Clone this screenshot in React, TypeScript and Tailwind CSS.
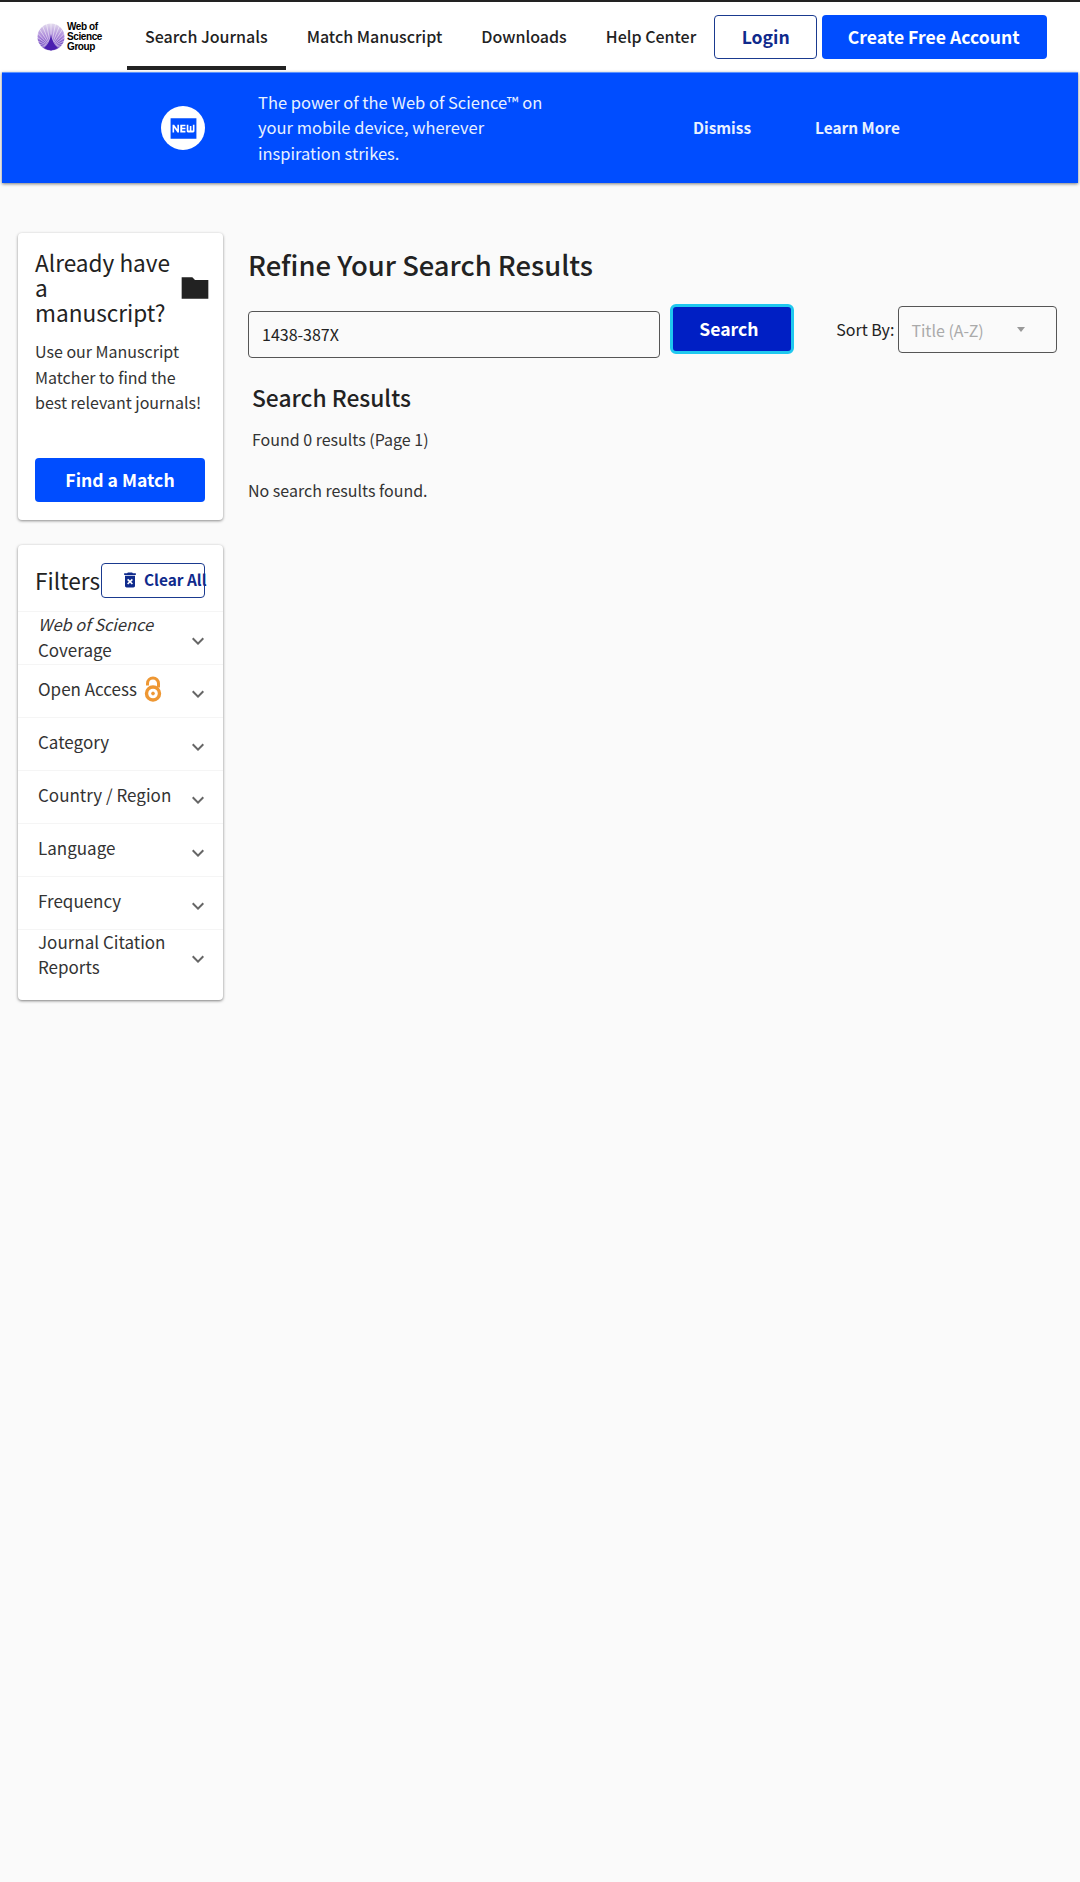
const NAV = ["Search Journals", "Match Manuscript", "Downloads", "Help Center"];
const FILTERS = ["Open Access", "Category", "Country / Region", "Language", "Frequency"];

function Chevron() {
  return (
    <svg viewBox="0 0 24 24" className="w-6 h-6 mt-[6px] shrink-0 fill-[#666666]">
      <path d="M16.59 8.59 12 13.17 7.41 8.59 6 10l6 6 6-6z" />
    </svg>
  );
}

function Logo() {
  const rays = Array.from({ length: 29 }, (_, i) => (i - 14) * 11);
  return (
    <div className="flex items-center gap-[2px] w-[64px] shrink-0">
      <svg viewBox="0 0 28 28" className="w-[28px] h-[28px] shrink-0">
        <defs>
          <linearGradient id="wos" x1="0" y1="0" x2="0" y2="1">
            <stop offset="0" stopColor="#e4dcee" />
            <stop offset="0.5" stopColor="#a884d8" />
            <stop offset="1" stopColor="#4a1fb0" />
          </linearGradient>
        </defs>
        <circle cx="14" cy="14" r="13.5" fill="url(#wos)" />
        {rays.map((a) => (
          <line
            key={a}
            x1="14"
            y1="24"
            x2={14 + 26 * Math.sin((a * Math.PI) / 180)}
            y2={24 - 26 * Math.cos((a * Math.PI) / 180)}
            stroke="#ffffff"
            strokeOpacity="0.75"
            strokeWidth="0.7"
          />
        ))}
        <path d="M7 25 Q13 20 14 11 Q15 20 21 25 Q14 29.5 7 25z" fill="#4a1fb0" />
      </svg>
      <p className="font-['Liberation_Sans',sans-serif] text-[10px] leading-[10px] font-bold tracking-[-0.4px] text-black">
        Web of
        <br />
        Science
        <br />
        Group
      </p>
    </div>
  );
}

function Header() {
  return (
    <header className="bg-white border-t-2 border-[#222222] h-[72px] flex items-center pl-[37px]">
      <Logo />
      <nav className="flex gap-[3px] ml-[26px] self-stretch">
        {NAV.map((item, i) => (
          <a
            key={item}
            className={
              i === 0
                ? "flex items-center px-[18px] text-[16px] font-medium whitespace-nowrap text-[#222222] border-y-4 border-t-transparent border-b-[#222222] mb-[2px]"
                : "flex items-center px-[18px] text-[16px] font-medium whitespace-nowrap text-[#222222] mb-[2px]"
            }
          >
            {item}
          </a>
        ))}
      </nav>
      <button className="w-[103px] h-[44px] rounded border border-[#1a3a8f] text-[17.6px] font-semibold text-[#0f2a8c]">
        Login
      </button>
      <button className="ml-[5px] w-[225px] h-[44px] pr-[2px] rounded bg-[#004dff] text-[17.6px] font-semibold text-white">
        Create Free Account
      </button>
    </header>
  );
}

function Banner() {
  return (
    <div className="mx-[2px] h-[111px] bg-[#004dff] border-t border-[#5b93ff] shadow-[0_1px_3px_rgba(0,0,0,0.5)] flex items-center pl-[159px] text-[#e8f1ff]">
      <div className="w-[44px] h-[44px] rounded-full bg-white flex items-center justify-center shrink-0">
        <svg viewBox="0 0 24 24" className="w-[31px] h-[31px] fill-[#004dff]">
          <path d="M22 4H2v16h20V4zM8.5 15H7.3l-2.55-3.5V15H3.5V9h1.25l2.5 3.5V9H8.5v6zm5-4.74H11v1.12h2.5v1.26H11v1.11h2.5V15h-4V9h4v1.26zm7 3.74c0 .55-.45 1-1 1h-4c-.55 0-1-.45-1-1V9h1.25v4.51h1.13V9.99h1.25v3.51h1.12V9h1.25v5z" />
        </svg>
      </div>
      <p className="ml-[53px] w-[300px] text-[16.5px] leading-[25.6px]">
        The power of the Web of Science™ on your mobile device, wherever inspiration strikes.
      </p>
      <a className="ml-[135px] text-[15.4px] font-semibold">Dismiss</a>
      <a className="ml-[64px] text-[15.4px] font-semibold">Learn More</a>
    </div>
  );
}

function ManuscriptCard() {
  return (
    <section className="bg-white rounded shadow-[0_1px_3px_rgba(0,0,0,0.45)] pl-[17px] pr-[12px] pt-[17px] pb-[18px]">
      <div className="flex items-center justify-between">
        <h2 className="w-[144px] text-[22.6px] leading-[25px] text-[#222222]">Already have a manuscript?</h2>
        <svg viewBox="0 0 24 24" className="w-8 h-8 shrink-0 fill-[#222222]">
          <path d="M10 4H2v16h20V6H12l-2-2z" />
        </svg>
      </div>
      <p className="mt-[14px] text-[16px] leading-[25.5px] text-[#333333]">
        Use our Manuscript Matcher to find the best relevant journals!
      </p>
      <button className="mt-[42px] w-[170px] h-[44px] pt-[1px] rounded bg-[#004dff] text-[17.6px] font-semibold text-white">
        Find a Match
      </button>
    </section>
  );
}

function OpenAccessIcon() {
  return (
    <svg viewBox="0 0 18 27" className="w-[18px] h-[27px] ml-[7px] mt-[2px]" fill="none" stroke="#ee9733">
      <circle cx="9" cy="17.5" r="6.5" strokeWidth="3.4" />
      <circle cx="9" cy="17.5" r="1.4" fill="#ee9733" strokeWidth="1" />
      <path d="M3.5 9.5V7.5a5.5 5.5 0 0 1 11 0v4" strokeWidth="3" />
    </svg>
  );
}

function FilterRow({ children }: { children: React.ReactNode }) {
  return (
    <div className="flex items-center justify-between h-[53px] border-t border-[#f5f5f5] pl-[20px] pr-[13px] text-[17px] leading-[25px] text-[#333333]">
      {children}
      <Chevron />
    </div>
  );
}

function FiltersCard() {
  return (
    <section className="mt-[25px] bg-white rounded shadow-[0_1px_3px_rgba(0,0,0,0.5)] pt-[18px] pb-[18px]">
      <div className="flex items-center pl-[17px] h-[48px] pb-[13px]">
        <h2 className="text-[22.6px] leading-[30px] w-[66px] text-[#222222] mt-[1px]">Filters</h2>
        <button className="w-[104px] h-[35px] rounded border border-[#1a3a8f] flex items-center pl-[18px] text-[15.4px] font-semibold text-[#0f2a8c] whitespace-nowrap">
          <svg viewBox="0 0 24 24" className="w-5 h-5 mr-[4px] shrink-0 fill-[#0f2a8c]">
            <path d="M6 19c0 1.1.9 2 2 2h8c1.1 0 2-.9 2-2V7H6v12zm2.46-7.12 1.41-1.41L12 12.59l2.12-2.12 1.41 1.41L13.41 14l2.12 2.12-1.41 1.41L12 15.41l-2.12 2.12-1.41-1.41L10.59 14l-2.13-2.12zM15.5 4l-1-1h-5l-1 1H5v2h14V4z" />
          </svg>
          Clear All
        </button>
      </div>
      <FilterRow>
        <span className="-mt-[2px]">
          <em className="text-[16.4px]">Web of Science</em>
          <br />
          Coverage
        </span>
      </FilterRow>
      {FILTERS.map((f) => (
        <FilterRow key={f}>
          <span className="flex items-center -mt-[5px]">
            {f}
            {f === "Open Access" && <OpenAccessIcon />}
          </span>
        </FilterRow>
      ))}
      <FilterRow>
        <span className="-mt-[4px]">
          Journal Citation
          <br />
          Reports
        </span>
      </FilterRow>
    </section>
  );
}

function Results() {
  return (
    <main className="flex-1 min-w-0 pt-[13px] text-[#222222]">
      <h1 className="text-[27.4px] leading-[36px] font-medium">Refine Your Search Results</h1>
      <div className="flex items-start mt-[22px]">
        <div className="mt-[7px] w-[413px] h-[47px] pb-[2px] rounded border border-[#555555] flex items-center pl-[13px] text-[16px]">
          1438-387X
        </div>
        <button className="ml-[10px] w-[125px] h-[50px] pr-[6px] rounded-md bg-[#001fc4] border-[3px] border-[#1fc8ef] text-[17.6px] font-semibold text-white">
          Search
        </button>
        <span className="ml-[42px] mt-[13px] text-[16px] leading-[25px] whitespace-nowrap">Sort By:</span>
        <div className="ml-[4px] mt-[2px] w-[159px] h-[47px] rounded border border-[#555555] flex items-center justify-between pl-[12px] pr-[31px] text-[16px] text-[#aaaaaa]">
          Title (A-Z)
          <span className="w-0 h-0 border-x-[4px] border-x-transparent border-t-[5px] border-t-[#999999]" />
        </div>
      </div>
      <h2 className="mt-[25px] ml-[4px] text-[22.8px] leading-[30px] font-medium">Search Results</h2>
      <p className="mt-[13px] ml-[4px] text-[16px] leading-[26px] text-[#333333]">Found 0 results (Page 1)</p>
      <p className="mt-[25px] text-[16px] leading-[26px] text-[#333333]">No search results found.</p>
    </main>
  );
}

export default function App() {
  return (
    <div className="min-h-[1882px] bg-[#fafafa] font-['Noto_Sans_CJK_JP','Noto_Sans',sans-serif]">
      <Header />
      <Banner />
      <div className="flex items-start pl-[18px] pr-[23px] pt-[50px] gap-[25px]">
        <aside className="w-[205px] shrink-0">
          <ManuscriptCard />
          <FiltersCard />
        </aside>
        <Results />
      </div>
    </div>
  );
}
